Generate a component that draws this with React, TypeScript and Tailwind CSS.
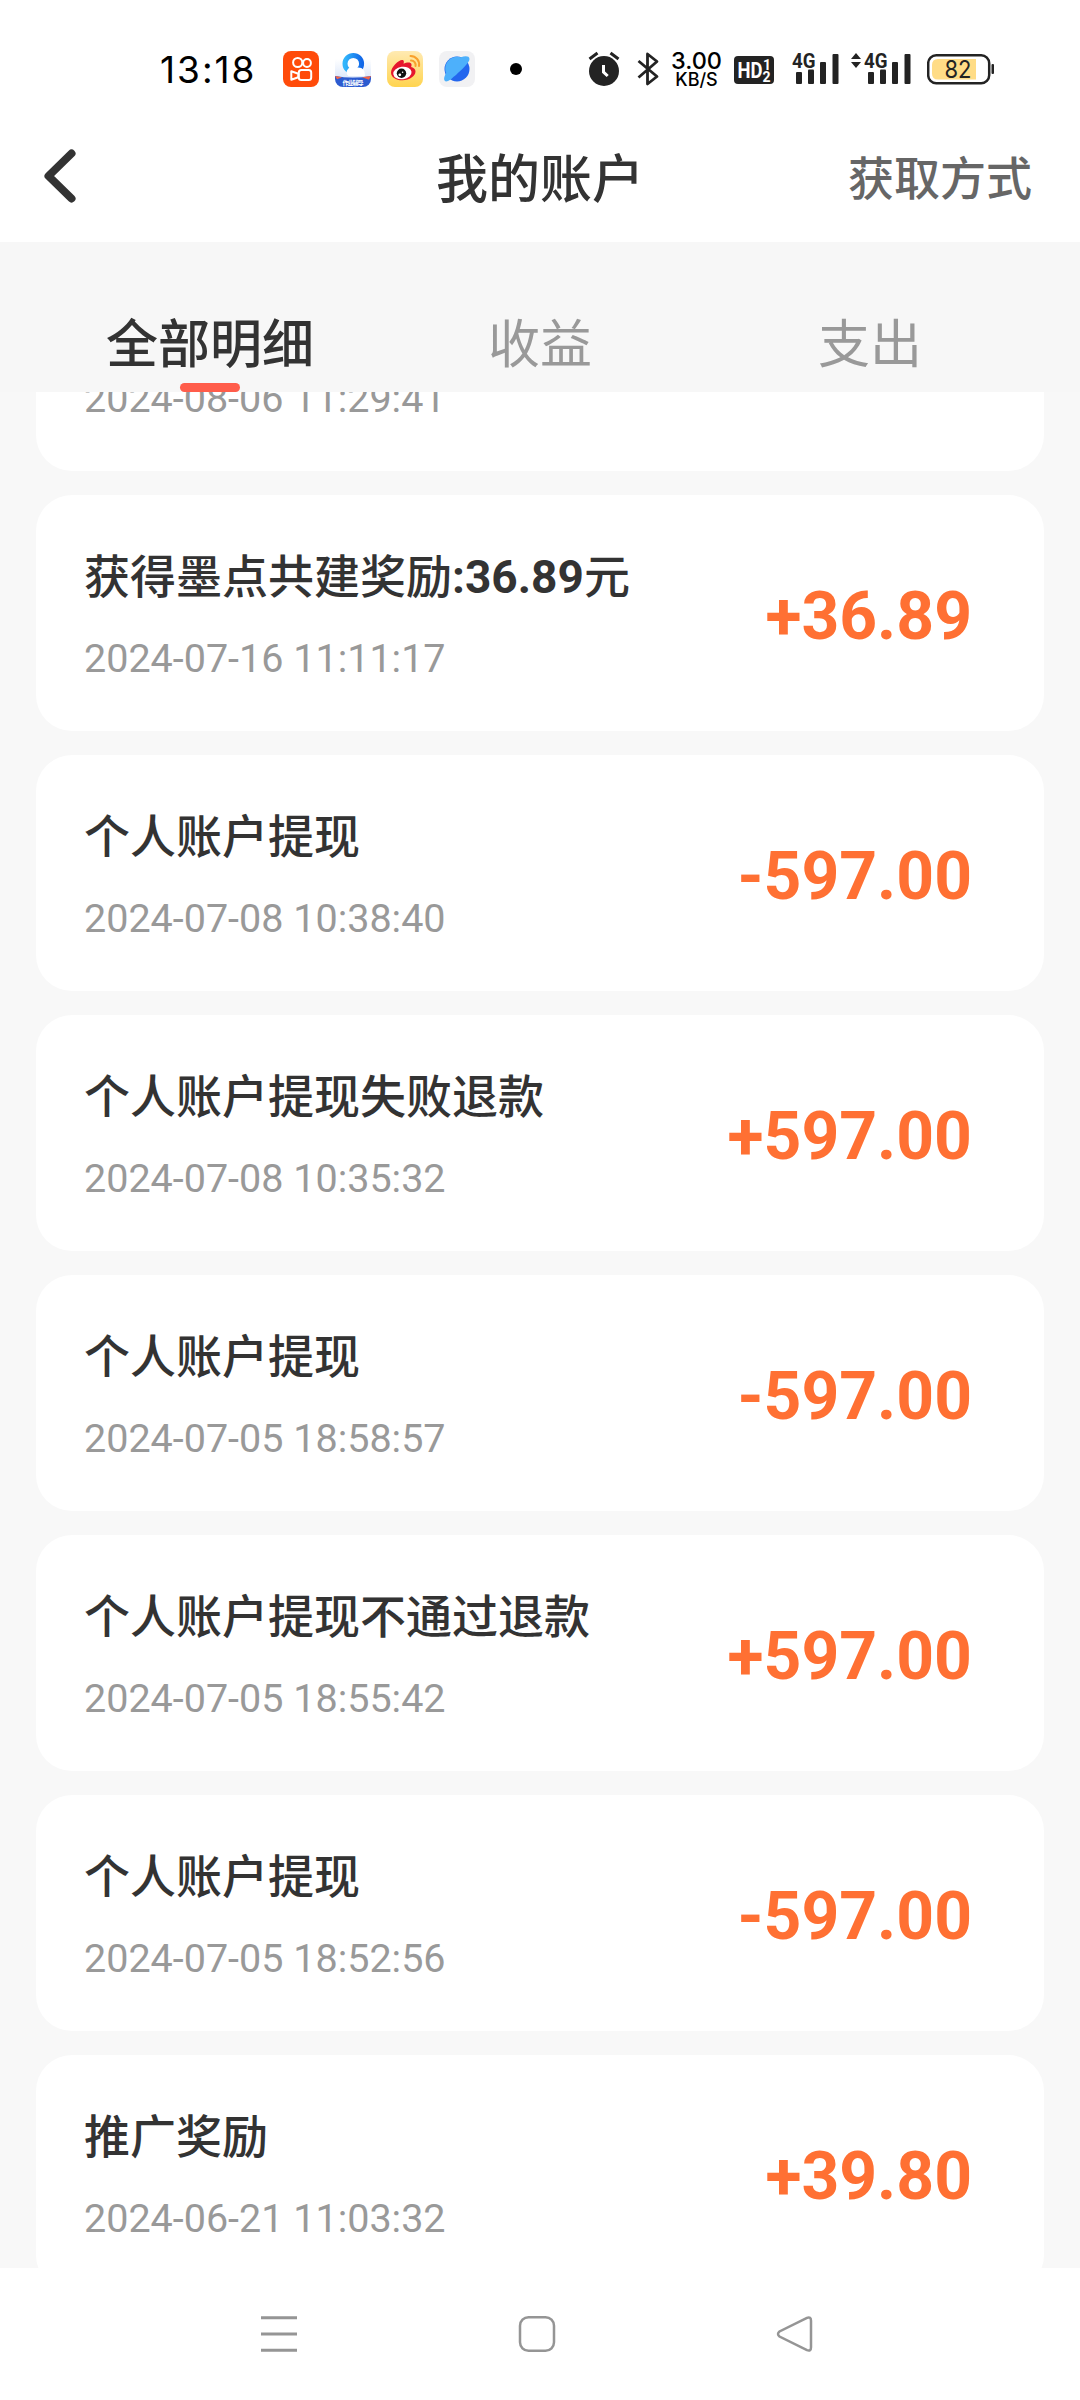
import clsx from 'clsx';

interface Entry {
    title: string;
    value?: string;
    time: string;
    amount: string;
}

// the first entry is scrolled up under the tabs, only its time is left in view
const entries: Entry[] = [
    { title: "", time: "2024-08-06 11:29:41", amount: "" },
    { title: "获得墨点共建奖励", value: ":36.89", time: "2024-07-16 11:11:17", amount: "+36.89" },
    { title: "个人账户提现", time: "2024-07-08 10:38:40", amount: "-597.00" },
    { title: "个人账户提现失败退款", time: "2024-07-08 10:35:32", amount: "+597.00" },
    { title: "个人账户提现", time: "2024-07-05 18:58:57", amount: "-597.00" },
    { title: "个人账户提现不通过退款", time: "2024-07-05 18:55:42", amount: "+597.00" },
    { title: "个人账户提现", time: "2024-07-05 18:52:56", amount: "-597.00" },
    { title: "推广奖励", time: "2024-06-21 11:03:32", amount: "+39.80" },
];

const tabs = ["全部明细", "收益", "支出"];

const KuaishouIcon = () => (
    <svg className="h-9 w-9" viewBox="0 0 36 36" fill="none" stroke="#fff" strokeWidth="2">
        <rect width="36" height="36" rx="8" fill="#ff4b0a" stroke="none" />
        <circle cx="14.7" cy="11.5" r="4.6" />
        <circle cx="24" cy="12" r="3.9" />
        <rect x="15.8" y="19" width="12.4" height="10" rx="2.5" />
        <path d="M8.3 20.2v8.6l7-2.500v-3.600z" strokeLinejoin="round" />
    </svg>
);

const BrowserIcon = () => (
    <svg className="h-9 w-9" viewBox="0 0 36 36">
        <defs>
            <linearGradient id="ring" x1="0" x2="1">
                <stop offset="0" stopColor="#31b5fb" />
                <stop offset="1" stopColor="#1268e8" />
            </linearGradient>
            <linearGradient id="haze" x1="0" y1="0" x2="0" y2="1">
                <stop offset="0" stopColor="#fff" />
                <stop offset="1" stopColor="#dfe9fa" />
            </linearGradient>
            <clipPath id="tile"><rect width="36" height="36" rx="8" /></clipPath>
        </defs>
        <g clipPath="url(#tile)">
            <rect y="8" width="36" height="18" fill="url(#haze)" />
            <circle cx="18.3" cy="12.7" r="8.3" fill="#fff" stroke="url(#ring)" strokeWidth="5" />
            <path d="M13.500 25a4.500 4.500 0 0 1-.5-7 6 6 0 0 1 8.500-1.500q9-1 8.500 8.500z" fill="#fff" />
            <path d="M0 25q18 3 36 0v11H0z" fill="#2c5bd0" />
            <path d="M0 25l7 1.200-5 2zM36 25l-9 1.300 7 2.500z" fill="#f0654a" />
        </g>
        <text x="18" y="34" textAnchor="middle" fontSize="6" fontWeight="700" fill="#fff" fontFamily="Noto Sans CJK SC, sans-serif" textLength="21">作业辅导</text>
    </svg>
);

const WeiboIcon = () => (
    <svg className="h-9 w-9" viewBox="0 0 36 36">
        <defs>
            <linearGradient id="gold" x1="0" y1="0" x2="0" y2="1">
                <stop offset="0" stopColor="#ffeab2" />
                <stop offset="1" stopColor="#ffd44f" />
            </linearGradient>
        </defs>
        <rect width="36" height="36" rx="8" fill="url(#gold)" />
        <path d="M4 21.500c0-6 8.500-13.500 11.700-12.500 1.500.5 1.300 2.500.8 3.800 3-1.500 7.500-2 8 .500.200 1-.1 1.800-.4 2.600 2 .6 4.400 1.800 4.400 4.600 0 4.500-6 8.800-13 8.800S4 26 4 21.500z" fill="#e6162d" />
        <ellipse cx="15.400" cy="22" rx="9.200" ry="6.200" transform="rotate(-8 15.400 22)" fill="#fff" />
        <circle cx="14.500" cy="22.300" r="4.700" fill="#111" />
        <circle cx="12.800" cy="23.800" r="1.400" fill="#fff" />
        <circle cx="15.600" cy="21.200" r=".8" fill="#fff" />
        <path d="M24 9.500a4.500 4.500 0 0 1 4.500 5.500M23.500 5a8.500 8.500 0 0 1 8.500 10" fill="none" stroke="#f9a02c" strokeWidth="2" strokeLinecap="round" />
    </svg>
);

const PlanetIcon = () => (
    <svg className="h-9 w-9" viewBox="0 0 36 36">
        <rect width="36" height="36" rx="8" fill="#f1f1f3" />
        <circle cx="18" cy="18" r="12.500" fill="#2366ee" />
        <path d="M7 30.500c-3-1-2-5 .2-8.500C3.500 13 12 3 22 6.300c4-1.500 8.500-1.500 8.500 1.700 0 4-9 11.500-13 15.500-4 3-7 7-10.500 7z" fill="#4db0fb" />
    </svg>
);

const AlarmIcon = () => (
    <svg className="h-9 w-8" viewBox="0 0 32 36" fill="none">
        <circle cx="16" cy="20" r="15" fill="#232323" />
        <path d="M1.500 8l8-6M30.500 8l-8-6" stroke="#232323" strokeWidth="3" />
        <path d="M15.500 14v7l4.200 4" stroke="#fff" strokeWidth="3" />
    </svg>
);

const BluetoothIcon = () => (
    <svg className="h-9 w-6" viewBox="0 0 24 36" fill="none" stroke="#232323" strokeWidth="2.800">
        <path d="M1.500 10l18.500 15.500-9.500 7.500V3l9.500 7.500L1.500 26.500" strokeLinejoin="round" />
    </svg>
);

const HdIcon = () => (
    <svg className="h-9 w-10" viewBox="0 0 40 36" fill="#fff" fontFamily="Roboto, sans-serif" fontWeight="700">
        <rect y="5" width="40" height="28" rx="4" fill="#232323" />
        <text x="3.500" y="27" fontSize="22" textLength="25" lengthAdjust="spacingAndGlyphs">HD</text>
        <text x="29" y="19" fontSize="14">1</text>
        <text x="28.500" y="30.500" fontSize="14">2</text>
    </svg>
);

const SignalIcon = () => (
    <svg className="h-9 w-12" viewBox="0 0 48 36" fill="#232323">
        <text x="0" y="16.500" fontSize="21" fontWeight="700" fontFamily="Roboto, sans-serif" textLength="23.500" lengthAdjust="spacingAndGlyphs">4G</text>
        <rect x="4" y="21" width="6" height="12" rx="1" />
        <rect x="16" y="18.500" width="6" height="14.500" rx="1" />
        <rect x="28" y="11" width="6" height="22" rx="1" />
        <rect x="40.500" y="3" width="6" height="30" rx="1" />
    </svg>
);

const BatteryIcon = () => (
    <svg className="h-9 w-[68px]" viewBox="0 0 68 36">
        <rect x="1.200" y="4.200" width="61" height="28" rx="8" fill="none" stroke="#232323" strokeWidth="2.500" />
        <path d="M11 8h38v20.500H11q-6 0-6-6V14q0-6 6-6z" fill="#ffdc86" />
        <rect x="64.500" y="13" width="2.500" height="10" rx="1" fill="#232323" />
        <text x="31" y="27" textAnchor="middle" fontSize="24" fill="#232323" fontFamily="Inter, sans-serif" textLength="27" lengthAdjust="spacingAndGlyphs">82</text>
    </svg>
);

const StatusBar = () => (
    <div className="flex h-[118px] items-start bg-white pt-[51px]">
        <span className="ml-[160px] w-[123px] font-['Inter'] text-[37px] leading-[38px] tracking-[2px] text-black">13:18</span>
        <div className="flex gap-4">
            <KuaishouIcon />
            <BrowserIcon />
            <WeiboIcon />
            <PlanetIcon />
        </div>
        <div className="mt-3 ml-[35px] h-3 w-3 rounded-full bg-black" />
        <div className="ml-[66px] flex">
            <AlarmIcon />
            <div className="ml-[17px]">
                <BluetoothIcon />
            </div>
            <div className="ml-[9px] flex w-[53px] flex-col items-center font-['Inter'] font-medium text-black">
                <span className="text-[23.5px] leading-[19px]">3.00</span>
                <span className="text-[18px] leading-[19px]">KB/S</span>
            </div>
            <div className="ml-[11px]">
                <HdIcon />
            </div>
            <div className="ml-[18px]">
                <SignalIcon />
            </div>
            <svg className="ml-[11px] h-9 w-[10px]" viewBox="0 0 10 36" fill="#232323">
                <path d="M0 8l5-6 5 6zM0 11l5 6 5-6z" />
            </svg>
            <div className="ml-[3px]">
                <SignalIcon />
            </div>
            <div className="ml-[15px]">
                <BatteryIcon />
            </div>
        </div>
    </div>
);

const Header = () => (
    <header className="grid h-[124px] grid-cols-[1fr_auto_1fr] items-center bg-white px-[48px]">
        <svg className="-mt-2 -ml-2 h-[60px] w-10" viewBox="0 0 40 60" fill="none" stroke="#333" strokeWidth="8" strokeLinecap="round" strokeLinejoin="round">
            <path d="M31.500 7.500L8.500 30l23 22.500" />
        </svg>
        <h1 className="mt-[2px] text-[52px] leading-[60px] font-medium text-[#333]">我的账户</h1>
        <span className="-mt-[3px] justify-self-end text-[46px] leading-[60px] font-medium text-[#666]">获取方式</span>
    </header>
);

const Tabs = () => (
    <div className="flex h-[150px] bg-[#f7f7f7] px-[45px] pt-[74px]">
        {tabs.map((tab, i) => (
            <div key={tab} className="flex flex-1 flex-col items-center">
                <span className={clsx("text-[52px] leading-[60px]", i === 0 ? "font-medium text-[#333]" : "text-[#999]")}>{tab}</span>
                {i === 0 && <div className="mt-[7px] h-[9px] w-[60px] rounded-full bg-[#ff5d4b]" />}
            </div>
        ))}
    </div>
);

const Card = ({ title, value, time, amount }: Entry) => (
    <div className="flex h-[236px] shrink-0 justify-between rounded-[36px] bg-white pr-[72px] pl-12">
        <div className="flex flex-col pt-[54px]">
            <p className="h-[56px] text-[46px] leading-[56px] font-medium text-[#333]">
                {title}
                {value && <><span className="font-bold">{value}</span>元</>}
            </p>
            <p className="mt-[30px] text-[39.5px] leading-[48px] text-[#999]">{time}</p>
        </div>
        <p className="mt-[8px] self-center text-[66px] leading-[72px] font-bold text-[#ff7033]">{amount}</p>
    </div>
);

const NavBar = () => (
    <nav className="flex h-[132px] items-center justify-between bg-white pr-[266px] pl-[259px]">
        <svg className="h-10 w-10" viewBox="0 0 40 40" stroke="#959595" strokeWidth="3">
            <path d="M2 3.700h36M2 20h36M2 36.300h36" />
        </svg>
        <svg className="h-10 w-10" viewBox="0 0 40 40" fill="none" stroke="#959595" strokeWidth="2.500">
            <rect x="3" y="3.200" width="34" height="33.600" rx="8.500" />
        </svg>
        <svg className="h-10 w-10" viewBox="0 0 40 40" fill="none" stroke="#959595" strokeWidth="2.500">
            <path d="M33 3.800L5.500 17.500q-3 2.500 0 5L33 36.200q4 1.500 4-3V6.800q0-4.500-4-3z" />
        </svg>
    </nav>
);

export default function App() {
    return (
        <div className="flex h-[2400px] w-[1080px] flex-col bg-[#f8f8f8] font-['Roboto','Noto_Sans_CJK_SC',sans-serif]">
            <StatusBar />
            <Header />
            <Tabs />
            <main className="flex-1 overflow-hidden px-9">
                <div className="-mt-[157px] flex flex-col gap-6">
                    {entries.map((entry) => (
                        <Card key={entry.time} {...entry} />
                    ))}
                </div>
            </main>
            <NavBar />
        </div>
    );
}
